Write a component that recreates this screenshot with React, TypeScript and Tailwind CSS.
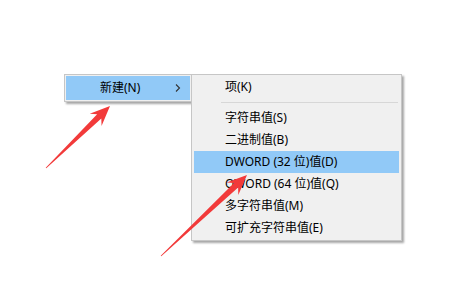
import type { FC } from "react";

const FONT = { fontFamily: '"Noto Sans", "Noto Sans CJK SC", sans-serif' };

const subItems = [
  "字符串值(S)",
  "二进制值(B)",
  "DWORD (32 位)值(D)",
  "QWORD (64 位)值(Q)",
  "多字符串值(M)",
  "可扩充字符串值(E)",
];

// build a tapered annotation arrow from tail to tip
function arrowPoints(tx: number, ty: number, px: number, py: number) {
  const dx = px - tx;
  const dy = py - ty;
  const len = Math.hypot(dx, dy);
  const ux = dx / len;
  const uy = dy / len;
  const nx = -uy;
  const ny = ux;
  const head = 20;
  const neckX = px - ux * head;
  const neckY = py - uy * head;
  const notchX = px - ux * (head - 5);
  const notchY = py - uy * (head - 5);
  const pts: [number, number][] = [
    [tx + nx * 0.4, ty + ny * 0.4],
    [notchX + nx * 3, notchY + ny * 3],
    [neckX + nx * 8.5, neckY + ny * 8.5],
    [px, py],
    [neckX - nx * 8.5, neckY - ny * 8.5],
    [notchX - nx * 3, notchY - ny * 3],
    [tx - nx * 0.4, ty - ny * 0.4],
  ];
  return pts.map((p) => p.join(",")).join(" ");
}

const App: FC = () => {
  return (
    <div className="relative w-[464px] h-[289px] bg-white overflow-hidden text-[12px] text-black" style={FONT}>
      {/* parent menu */}
      <div className="absolute left-[64px] top-[74px] w-[128px] h-[28px] bg-[#f0f0f0] border border-[#c6c6c6] shadow-[2px_2px_2px_rgba(0,0,0,0.35)] p-[1px]">
        <div className="flex items-center h-[24px] bg-[#91c9f7] pl-[34px] pr-[6px]">
          <span className="flex-1">新建(N)</span>
          <svg width="8" height="10" viewBox="0 0 8 10" className="mr-[2px]">
            <path d="M2 1.5 L5.5 5 L2 8.5" fill="none" stroke="#333" strokeWidth="1.1" />
          </svg>
        </div>
      </div>

      {/* submenu */}
      <div className="absolute left-[191px] top-[74px] w-[211px] h-[167px] bg-[#f0f0f0] border border-[#c6c6c6] shadow-[2px_2px_2px_rgba(0,0,0,0.35)] p-[1px]">
        <div className="flex items-center h-[22px] pl-[32px]">项(K)</div>
        <div className="h-[9px] flex items-center pl-[28px] pr-[2px]">
          <div className="h-px w-full bg-[#d7d7d7]" />
        </div>
        {subItems.map((label, i) => (
          <div
            key={label}
            className={
              i === 2
                ? "flex items-center h-[22px] pl-[32px] bg-[#91c9f7] mx-[1px] -indent-[1px]"
                : "flex items-center h-[22px] pl-[32px]"
            }
          >
            {label}
          </div>
        ))}
      </div>

      {/* annotation arrows */}
      <svg className="absolute left-0 top-0" width="464" height="289">
        <polygon points={arrowPoints(46, 168, 110, 106)} fill="#f23a3a" />
        <polygon points={arrowPoints(161, 256, 247, 175)} fill="#f23a3a" />
      </svg>
    </div>
  );
};

export default App;
